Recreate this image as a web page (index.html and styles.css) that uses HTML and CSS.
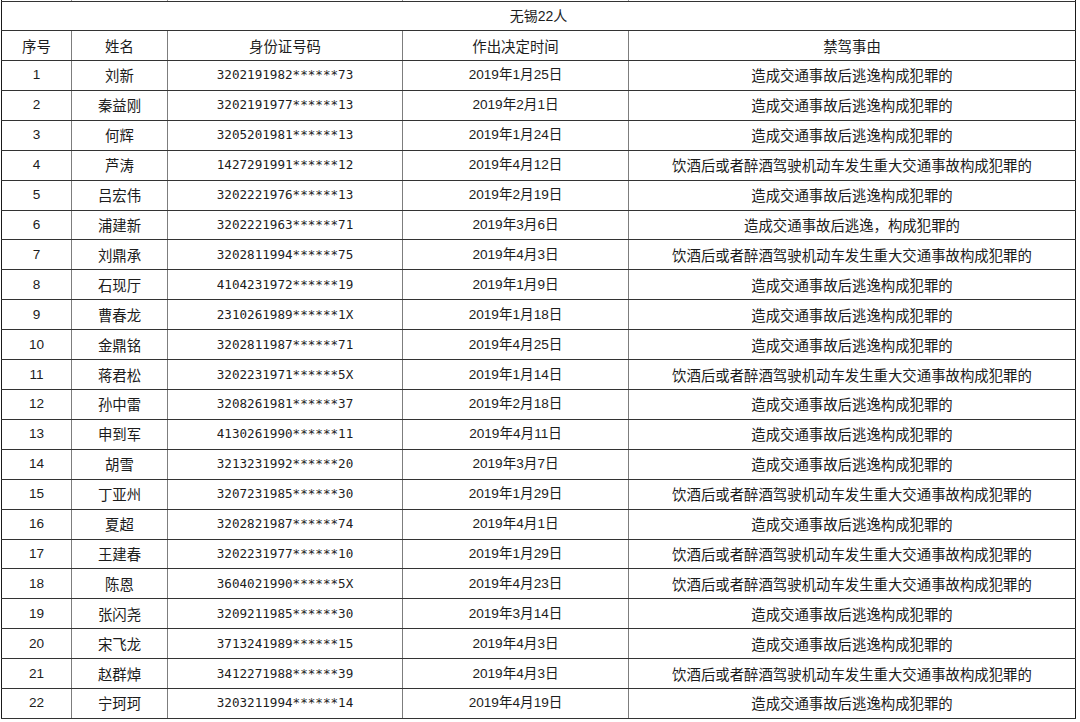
FILE: index.html
```html
<!DOCTYPE html>
<html lang="zh-CN">
<head>
<meta charset="utf-8">
<title>无锡22人</title>
<link rel="stylesheet" href="styles.css">
</head>
<body>
<table class="sheet">
  <colgroup>
    <col class="c-no"><col class="c-name"><col class="c-id"><col class="c-date"><col class="c-reason">
  </colgroup>
  <tbody>
    <tr class="sliver"><td></td><td></td><td></td><td></td><td></td></tr>
    <tr class="title"><td colspan="5">无锡22人</td></tr>
    <tr class="head"><td>序号</td><td>姓名</td><td>身份证号码</td><td>作出决定时间</td><td>禁驾事由</td></tr>
    <tr><td class="no">1</td><td class="cn">刘新</td><td class="id">3202191982******73</td><td class="date">2019年1月25日</td><td class="cn">造成交通事故后逃逸构成犯罪的</td></tr>
    <tr><td class="no">2</td><td class="cn">秦益刚</td><td class="id">3202191977******13</td><td class="date">2019年2月1日</td><td class="cn">造成交通事故后逃逸构成犯罪的</td></tr>
    <tr><td class="no">3</td><td class="cn">何辉</td><td class="id">3205201981******13</td><td class="date">2019年1月24日</td><td class="cn">造成交通事故后逃逸构成犯罪的</td></tr>
    <tr><td class="no">4</td><td class="cn">芦涛</td><td class="id">1427291991******12</td><td class="date">2019年4月12日</td><td class="cn">饮酒后或者醉酒驾驶机动车发生重大交通事故构成犯罪的</td></tr>
    <tr><td class="no">5</td><td class="cn">吕宏伟</td><td class="id">3202221976******13</td><td class="date">2019年2月19日</td><td class="cn">造成交通事故后逃逸构成犯罪的</td></tr>
    <tr><td class="no">6</td><td class="cn">浦建新</td><td class="id">3202221963******71</td><td class="date">2019年3月6日</td><td class="cn">造成交通事故后逃逸，构成犯罪的</td></tr>
    <tr><td class="no">7</td><td class="cn">刘鼎承</td><td class="id">3202811994******75</td><td class="date">2019年4月3日</td><td class="cn">饮酒后或者醉酒驾驶机动车发生重大交通事故构成犯罪的</td></tr>
    <tr><td class="no">8</td><td class="cn">石现厅</td><td class="id">4104231972******19</td><td class="date">2019年1月9日</td><td class="cn">造成交通事故后逃逸构成犯罪的</td></tr>
    <tr><td class="no">9</td><td class="cn">曹春龙</td><td class="id">2310261989******1X</td><td class="date">2019年1月18日</td><td class="cn">造成交通事故后逃逸构成犯罪的</td></tr>
    <tr><td class="no">10</td><td class="cn">金鼎铭</td><td class="id">3202811987******71</td><td class="date">2019年4月25日</td><td class="cn">造成交通事故后逃逸构成犯罪的</td></tr>
    <tr><td class="no">11</td><td class="cn">蒋君松</td><td class="id">3202231971******5X</td><td class="date">2019年1月14日</td><td class="cn">饮酒后或者醉酒驾驶机动车发生重大交通事故构成犯罪的</td></tr>
    <tr><td class="no">12</td><td class="cn">孙中雷</td><td class="id">3208261981******37</td><td class="date">2019年2月18日</td><td class="cn">造成交通事故后逃逸构成犯罪的</td></tr>
    <tr><td class="no">13</td><td class="cn">申到军</td><td class="id">4130261990******11</td><td class="date">2019年4月11日</td><td class="cn">造成交通事故后逃逸构成犯罪的</td></tr>
    <tr><td class="no">14</td><td class="cn">胡雪</td><td class="id">3213231992******20</td><td class="date">2019年3月7日</td><td class="cn">造成交通事故后逃逸构成犯罪的</td></tr>
    <tr><td class="no">15</td><td class="cn">丁亚州</td><td class="id">3207231985******30</td><td class="date">2019年1月29日</td><td class="cn">饮酒后或者醉酒驾驶机动车发生重大交通事故构成犯罪的</td></tr>
    <tr><td class="no">16</td><td class="cn">夏超</td><td class="id">3202821987******74</td><td class="date">2019年4月1日</td><td class="cn">造成交通事故后逃逸构成犯罪的</td></tr>
    <tr><td class="no">17</td><td class="cn">王建春</td><td class="id">3202231977******10</td><td class="date">2019年1月29日</td><td class="cn">饮酒后或者醉酒驾驶机动车发生重大交通事故构成犯罪的</td></tr>
    <tr><td class="no">18</td><td class="cn">陈恩</td><td class="id">3604021990******5X</td><td class="date">2019年4月23日</td><td class="cn">饮酒后或者醉酒驾驶机动车发生重大交通事故构成犯罪的</td></tr>
    <tr><td class="no">19</td><td class="cn">张闪尧</td><td class="id">3209211985******30</td><td class="date">2019年3月14日</td><td class="cn">造成交通事故后逃逸构成犯罪的</td></tr>
    <tr><td class="no">20</td><td class="cn">宋飞龙</td><td class="id">3713241989******15</td><td class="date">2019年4月3日</td><td class="cn">造成交通事故后逃逸构成犯罪的</td></tr>
    <tr><td class="no">21</td><td class="cn">赵群焯</td><td class="id">3412271988******39</td><td class="date">2019年4月3日</td><td class="cn">饮酒后或者醉酒驾驶机动车发生重大交通事故构成犯罪的</td></tr>
    <tr><td class="no">22</td><td class="cn">宁珂珂</td><td class="id">3203211994******14</td><td class="date">2019年4月19日</td><td class="cn">造成交通事故后逃逸构成犯罪的</td></tr>
  </tbody>
</table>
</body>
</html>
```

FILE: styles.css
```css
html, body {
  margin: 0;
  padding: 0;
  background: #ffffff;
}

.sheet {
  margin-left: 1px;
  border-collapse: collapse;
  table-layout: fixed;
  width: 1075px;
  color: #1c1c1c;
  font-family: "Noto Sans CJK SC", sans-serif;
  font-size: 14.4px;
  border-left: 1px solid #1a1a1a;
  border-right: 1px solid #1a1a1a;
}

.c-no { width: 70px; }
.c-name { width: 96px; }
.c-id { width: 235px; }
.c-date { width: 226px; }
.c-reason { width: 447px; }

.sheet td {
  padding: 0;
  height: 28.92px;
  text-align: center;
  vertical-align: middle;
  white-space: nowrap;
  line-height: 16px;
  border-top: 1px solid #333333;
  border-bottom: 1px solid #333333;
  border-left: 1px solid #7d7d7d;
  border-right: 1px solid #7d7d7d;
}

.sheet td:first-child { border-left-color: #1a1a1a; }
.sheet td:last-child { border-right-color: #1a1a1a; }

.sheet .sliver td {
  height: 1px;
  line-height: 0;
  border-top: none;
  border-left-color: #9a9a9a;
  border-right-color: #9a9a9a;
}
.sheet .sliver td:first-child { border-left-color: #1a1a1a; }
.sheet .sliver td:last-child { border-right-color: #1a1a1a; }

.sheet .title td {
  height: 28px;
  font-family: "Liberation Sans", "Noto Sans CJK SC", sans-serif;
  font-size: 14px;
  border-left-color: #1a1a1a;
  border-right-color: #1a1a1a;
}

.sheet .head td {
  height: 29px;
  font-size: 14.4px;
}

.sheet td.no {
  font-family: "Liberation Sans", sans-serif;
  font-size: 13.6px;
}

.sheet td.id {
  font-family: "DejaVu Sans Mono", monospace;
  font-size: 12.6px;
}

.sheet td.date {
  font-family: "Liberation Sans", "Noto Sans CJK SC", sans-serif;
  font-size: 13.6px;
}

.sheet td.cn {
  font-family: "Noto Sans CJK SC", sans-serif;
  font-size: 14.4px;
}
```
